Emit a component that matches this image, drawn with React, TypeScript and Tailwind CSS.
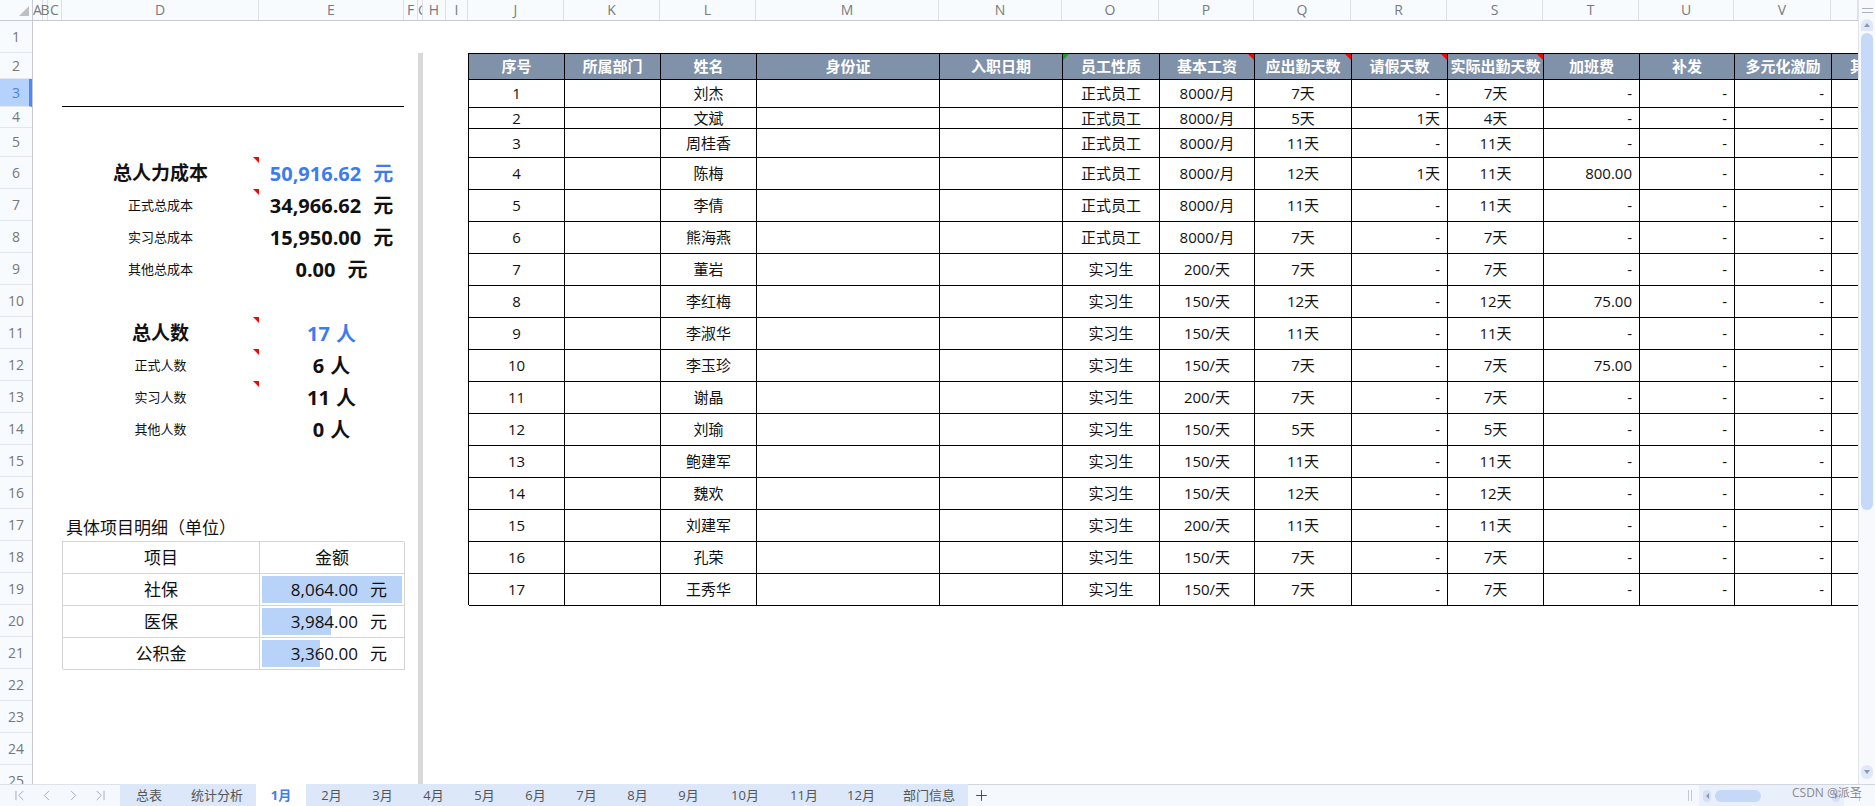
import { ChevronFirst, ChevronLast, ChevronLeft, ChevronRight, Plus } from "lucide-react";

const COLS = ["A", "B", "C", "D", "E", "F", "G", "H", "I", "J", "K", "L", "M", "N", "O", "P", "Q", "R", "S", "T", "U", "V", ""];
const ROWS = Array.from({ length: 25 }, (_, i) => i + 1);

const HEADERS = ["序号", "所属部门", "姓名", "身份证", "入职日期", "员工性质", "基本工资", "应出勤天数", "请假天数", "实际出勤天数", "加班费", "补发", "多元化激励", "其他补贴"];

// no, name, type, pay, due, leave, actual, overtime
const STAFF: [number, string, string, string, string, string, string, string][] = [
  [1, "刘杰", "正式员工", "8000/月", "7天", "-", "7天", "-"],
  [2, "文斌", "正式员工", "8000/月", "5天", "1天", "4天", "-"],
  [3, "周桂香", "正式员工", "8000/月", "11天", "-", "11天", "-"],
  [4, "陈梅", "正式员工", "8000/月", "12天", "1天", "11天", "800.00"],
  [5, "李倩", "正式员工", "8000/月", "11天", "-", "11天", "-"],
  [6, "熊海燕", "正式员工", "8000/月", "7天", "-", "7天", "-"],
  [7, "董岩", "实习生", "200/天", "7天", "-", "7天", "-"],
  [8, "李红梅", "实习生", "150/天", "12天", "-", "12天", "75.00"],
  [9, "李淑华", "实习生", "150/天", "11天", "-", "11天", "-"],
  [10, "李玉珍", "实习生", "150/天", "7天", "-", "7天", "75.00"],
  [11, "谢晶", "实习生", "200/天", "7天", "-", "7天", "-"],
  [12, "刘瑜", "实习生", "150/天", "5天", "-", "5天", "-"],
  [13, "鲍建军", "实习生", "150/天", "11天", "-", "11天", "-"],
  [14, "魏欢", "实习生", "150/天", "12天", "-", "12天", "-"],
  [15, "刘建军", "实习生", "200/天", "11天", "-", "11天", "-"],
  [16, "孔荣", "实习生", "150/天", "7天", "-", "7天", "-"],
  [17, "王秀华", "实习生", "150/天", "7天", "-", "7天", "-"],
];

const RIGHT_COLS = [8, 10, 11, 12];

const STATS = [
  { label: "总人力成本", value: "50,916.62", unit: "元", main: true, note: true },
  { label: "正式总成本", value: "34,966.62", unit: "元", main: false, note: true },
  { label: "实习总成本", value: "15,950.00", unit: "元", main: false, note: false },
  { label: "其他总成本", value: "0.00", unit: "元", main: false, note: false },
  null,
  { label: "总人数", value: "17", unit: "人", main: true, note: true },
  { label: "正式人数", value: "6", unit: "人", main: false, note: true },
  { label: "实习人数", value: "11", unit: "人", main: false, note: true },
  { label: "其他人数", value: "0", unit: "人", main: false, note: false },
];

const ITEMS = [
  { name: "社保", amount: 8064 },
  { name: "医保", amount: 3984 },
  { name: "公积金", amount: 3360 },
];

const TABS = [
  { name: "总表", w: "w-[58px]" },
  { name: "统计分析", w: "w-[78px]" },
  { name: "1月", w: "w-[50px]", active: true },
  { name: "2月", w: "w-[51px]" },
  { name: "3月", w: "w-[51px]" },
  { name: "4月", w: "w-[51px]" },
  { name: "5月", w: "w-[51px]" },
  { name: "6月", w: "w-[51px]" },
  { name: "7月", w: "w-[51px]" },
  { name: "8月", w: "w-[51px]" },
  { name: "9月", w: "w-[51px]" },
  { name: "10月", w: "w-[62px]" },
  { name: "11月", w: "w-[56px]" },
  { name: "12月", w: "w-[58px]" },
  { name: "部门信息", w: "w-[78px]" },
];

function RedNote() {
  return <span className="absolute right-0 top-0 h-0 w-0 border-l-[6px] border-t-[6px] border-l-transparent border-t-[#ff0000]" />;
}

function MainTable() {
  return (
    <div className="col-[10/24] row-[2/20] grid grid-cols-[96px_96px_96px_183px_123px_97px_95px_97px_96px_96px_96px_95px_97px_27px] grid-rows-[26px_28px_21px_29px_repeat(14,32px)] border-l border-t border-black text-[15px] text-[#111]">
      {HEADERS.map((h, i) => (
        <div
          key={h}
          className={
            i === 13
              ? "relative flex items-center overflow-hidden whitespace-nowrap border-b border-black bg-[#8091aa] pl-[18px] font-bold text-white"
              : "relative flex items-center justify-center whitespace-nowrap border-b border-r border-black bg-[#8091aa] font-bold text-white"
          }
        >
          {h}
          {i === 5 && <span className="absolute left-0 top-0 h-0 w-0 border-r-[6px] border-t-[6px] border-r-transparent border-t-[#1a9a32]" />}
          {i >= 6 && i <= 9 && <RedNote />}
        </div>
      ))}
      {STAFF.map((r) => {
        const cells = [String(r[0]), "", r[1], "", "", r[2], r[3], r[4], r[5], r[6], r[7], "-", "-", ""];
        return cells.map((c, i) => (
          <div
            key={r[0] + "-" + i}
            className={
              i === 13
                ? "border-b border-black"
                : RIGHT_COLS.includes(i)
                  ? "flex items-center justify-end whitespace-nowrap border-b border-r border-black pr-[7px]"
                  : "flex items-center justify-center whitespace-nowrap border-b border-r border-black"
            }
          >
            {c}
          </div>
        ));
      })}
    </div>
  );
}

function Stats() {
  return (
    <div className="col-[4/6] row-[6/15] grid grid-cols-[197px_145px] grid-rows-[repeat(9,32px)] text-[#111]">
      {STATS.map((s, i) =>
        s === null ? (
          <div key={i} className="col-span-2" />
        ) : (
          [
            <div
              key={i + "l"}
              className={
                s.main
                  ? "relative flex items-center justify-center text-[19px] font-bold"
                  : "relative flex items-center justify-center text-[13px]"
              }
            >
              {s.label}
              {s.note && <RedNote />}
            </div>,
            <div
              key={i + "v"}
              className={
                s.main
                  ? "flex items-center justify-center pt-[1px] text-[20px] font-bold text-[#3b7ded]"
                  : "flex items-center justify-center pt-[1px] text-[20px] font-bold"
              }
            >
              <span>{s.value}</span>
              <span className={s.unit === "元" ? "ml-[12px]" : "ml-[6px]"}>{s.unit}</span>
            </div>,
          ]
        )
      )}
    </div>
  );
}

function ItemTable() {
  const max = Math.max(...ITEMS.map((i) => i.amount));
  return (
    <div className="col-[4/6] row-[18/22] grid grid-cols-[197px_145px] grid-rows-[repeat(4,32px)] border-l border-t border-[#d4d4d4] text-[17px] text-[#111]">
      <div className="flex items-center justify-center border-b border-r border-[#d4d4d4]">项目</div>
      <div className="flex items-center justify-center border-b border-r border-[#d4d4d4]">金额</div>
      {ITEMS.map((it) => [
        <div key={it.name} className="flex items-center justify-center border-b border-r border-[#d4d4d4]">
          {it.name}
        </div>,
        <div key={it.name + "a"} className="relative flex items-center justify-end border-b border-r border-[#d4d4d4] pr-[17px]">
          <span
            className="absolute bottom-[2px] left-[2px] top-[2px] bg-[#b8d2f8]"
            style={{ width: `${(it.amount / max) * 140}px` }}
          />
          <span className="relative">{it.amount.toLocaleString("en-US", { minimumFractionDigits: 2 })}</span>
          <span className="relative ml-[12px]">元</span>
        </div>,
      ])}
    </div>
  );
}

function VScroll() {
  return (
    <div className="flex w-[17px] flex-col items-center border-l border-[#e1e5eb] bg-[#f7f9fc]">
      <div className="flex h-[21px] flex-col justify-center gap-[3px]">
        <span className="h-px w-[11px] bg-[#a9b2bf]" />
        <span className="h-px w-[11px] bg-[#a9b2bf]" />
      </div>
      <div className="mt-[-2px] flex h-[12px] w-[12px] items-center justify-center rounded-t-full bg-[#dfe8f8]">
        <span className="h-0 w-0 border-x-[3px] border-b-[4px] border-x-transparent border-b-[#8c99ad]" />
      </div>
      <div className="mt-[2px] h-[477px] w-[12px] rounded-full bg-[#c7d9f8]" />
      <div className="flex-1" />
      <div className="mb-[5px] flex h-[14px] w-[12px] items-center justify-center rounded-full bg-[#dfe8f8]">
        <span className="h-0 w-0 border-x-[3px] border-t-[4px] border-x-transparent border-t-[#8c99ad]" />
      </div>
    </div>
  );
}

function TabBar() {
  return (
    <div className="relative flex h-[22px] items-center bg-[#f5f8fd] text-[13px] text-[#555]">
      <div className="flex h-full w-[120px] items-center justify-between border-t border-[#dde2ea] px-[11px] text-[#8f98a6]">
        <ChevronFirst size={17} strokeWidth={1.1} />
        <ChevronLeft size={17} strokeWidth={1.1} />
        <ChevronRight size={17} strokeWidth={1.1} />
        <ChevronLast size={17} strokeWidth={1.1} />
      </div>
      <div className="flex h-full bg-[#dce7fa]">
        {TABS.map((t) => (
          <div
            key={t.name}
            className={
              t.active
                ? "flex h-full w-[50px] items-center justify-center bg-white font-bold text-[#3d7ef0]"
                : `flex h-full items-center justify-center ${t.w}`
            }
          >
            {t.name}
          </div>
        ))}
      </div>
      <div className="flex h-full flex-1 items-center border-t border-[#d2d7df] pl-[5px]">
        <Plus size={17} strokeWidth={1.2} className="text-[#333]" />
        <div className="ml-auto flex h-full items-center">
          <div className="mr-[7px] flex gap-[2px]">
            <span className="h-[11px] w-px bg-[#c4cad3]" />
            <span className="h-[11px] w-px bg-[#c4cad3]" />
          </div>
          <div className="flex h-full w-[145px] items-center bg-[#eaf0fb] px-[4px]">
            <span className="flex h-[12px] w-[8px] items-center justify-center rounded-full bg-[#d3e0f7]">
              <span className="h-0 w-0 border-y-[3px] border-r-[3px] border-y-transparent border-r-[#8c99ad]" />
            </span>
            <span className="ml-[4px] h-[12px] w-[46px] rounded-full bg-[#c5d8f8]" />
            <span className="flex-1" />
            <span className="flex h-[12px] w-[8px] items-center justify-center rounded-full bg-[#d3e0f7]">
              <span className="h-0 w-0 border-y-[3px] border-l-[3px] border-y-transparent border-l-[#8c99ad]" />
            </span>
          </div>
          <div className="flex h-full w-[31px] items-center justify-center">
            <span className="h-[10px] w-px bg-[#c4cad3]" />
          </div>
        </div>
      </div>
      <span className="absolute left-[1792px] top-[3px] text-[12px] text-[#8a8a8a]">CSDN @派圣</span>
    </div>
  );
}

export default function App() {
  return (
    <div className="flex h-[806px] w-[1875px] flex-col overflow-hidden bg-white font-['Open_Sans','Noto_Sans_CJK_SC',sans-serif] leading-none">
      <div className="flex h-[784px]">
        <div className="flex w-[1858px] flex-col">
          <div className="grid h-[21px] grid-cols-[33px_10px_5px_14px_197px_145px_14px_5px_23px_22px_96px_96px_96px_183px_123px_97px_95px_97px_96px_96px_96px_95px_97px_27px] border-b border-[#c8ccd2] bg-[#f8fbfe] text-[14px] text-[#7a7a7a]">
            <div className="relative border-r border-[#c8ccd2]">
              <span className="absolute bottom-[4px] right-[3px] h-0 w-0 border-b-[10px] border-l-[10px] border-b-[#bfbfbf] border-l-transparent" />
            </div>
            {COLS.map((c, i) => (
              <div
                key={c + i}
                className={
                  c === "G"
                    ? "flex items-center justify-start overflow-hidden border-r border-[#dde1e6]"
                    : "flex items-center justify-center border-r border-[#dde1e6]"
                }
              >
                {c}
              </div>
            ))}
          </div>
          <div className="flex flex-1 overflow-hidden">
            <div className="grid w-[33px] grid-rows-[32px_26px_28px_21px_29px_repeat(19,32px)_19px] border-r border-[#c8ccd2] bg-[#f8fbfe] text-[14px] text-[#777]">
              {ROWS.map((r) =>
                r === 3 ? (
                  <div key={r} className="flex items-center justify-center border-b border-r-[3px] border-b-[#e3e6ea] border-r-[#4a8af4] bg-[#b5d2fc] pl-[3px] text-[#4b83e6]">
                    {r}
                  </div>
                ) : r === 25 ? (
                  <div key={r} className="flex items-start justify-center overflow-hidden pt-[9px]">
                    {r}
                  </div>
                ) : (
                  <div key={r} className="flex items-center justify-center border-b border-[#e3e6ea]">
                    {r}
                  </div>
                )
              )}
            </div>
            <div className="grid flex-1 grid-cols-[10px_5px_14px_197px_145px_14px_5px_23px_22px_96px_96px_96px_183px_123px_97px_95px_97px_96px_96px_96px_95px_97px_27px] grid-rows-[32px_26px_28px_21px_29px_repeat(19,32px)_19px] overflow-hidden">
              <div className="col-[4/6] row-[3] border-b border-black" />
              <div className="col-[7] row-[2/26] bg-[#d9d9d9]" />
              <Stats />
              <div className="col-[4/6] row-[17] flex items-end pb-[5px] pl-[4px] text-[17px] text-[#111]">具体项目明细（单位）</div>
              <ItemTable />
              <MainTable />
            </div>
          </div>
        </div>
        <VScroll />
      </div>
      <TabBar />
    </div>
  );
}
